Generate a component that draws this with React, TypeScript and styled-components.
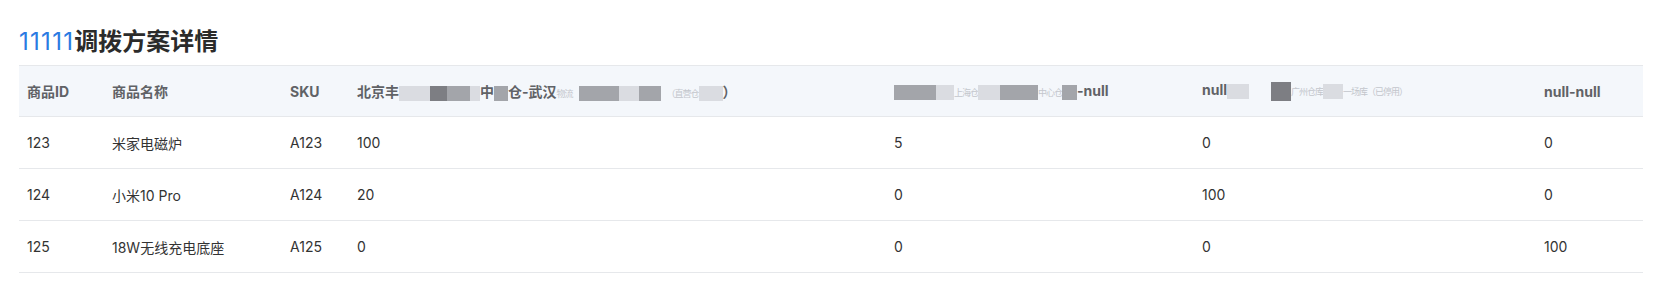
import React from 'react';
import styled, { createGlobalStyle } from 'styled-components';

const GlobalStyle = createGlobalStyle`
  body {
    margin: 0;
    background: #ffffff;
    font-family: Inter, "Noto Sans CJK SC", sans-serif;
  }
`;

const Page = styled.div`
  padding: 26px 20px 0 19px;
`;

const Title = styled.h2`
  margin: 0 0 8px;
  font-size: 24px;
  line-height: 31px;
  font-weight: 700;
  color: #2b2b2b;
`;

const PlanNo = styled.span`
  color: #2a7ae2;
  font-weight: 400;
  letter-spacing: 1.3px;
`;

const Table = styled.table`
  width: 1624px;
  border-collapse: collapse;
  table-layout: fixed;
  font-size: 14px;
`;

const Col = styled.col<{ $w: number }>`
  width: ${p => p.$w}px;
`;

const HeadRow = styled.tr`
  background: #f4f7fb;
  border-top: 1px solid #e6e8eb;
  border-bottom: 1px solid #e6e8eb;
`;

const Th = styled.th`
  height: 50px;
  padding: 0 8px;
  text-align: left;
  font-weight: 700;
  color: #606266;
  white-space: nowrap;
`;

const Row = styled.tr`
  border-bottom: 1px solid #e6e8eb;
`;

const Td = styled.td`
  height: 51px;
  padding: 0 8px;
  color: #333333;
  white-space: nowrap;
`;

// blurred bits of the masked warehouse names
const Faint = styled.span`
  display: inline-block;
  vertical-align: middle;
  font-size: 9px;
  font-weight: 400;
  letter-spacing: -1px;
  color: #c3c6cc;
`;

const tones = {
  dark: '#7d7e83',
  mid: '#a3a5aa',
  light: '#dadce1',
  none: 'transparent',
};

const Mask = styled.span<{ $tone: keyof typeof tones; $w: number; $h?: number }>`
  display: inline-block;
  width: ${p => p.$w}px;
  height: ${p => p.$h ?? 15}px;
  background: ${p => tones[p.$tone]};
  vertical-align: middle;
`;

type Seg =
  | { t: string }
  | { f: string }
  | { b: keyof typeof tones; w: number; h?: number };

const Segs = ({ list }: { list: Seg[] }) => (
  <>
    {list.map((s, i) => {
      if ('t' in s) return <span key={i}>{s.t}</span>;
      if ('f' in s) return <Faint key={i}>{s.f}</Faint>;
      return <Mask key={i} $tone={s.b} $w={s.w} $h={s.h} aria-hidden />;
    })}
  </>
);

const columns: { w: number; head: Seg[] }[] = [
  { w: 85, head: [{ t: '商品ID' }] },
  { w: 178, head: [{ t: '商品名称' }] },
  { w: 67, head: [{ t: 'SKU' }] },
  {
    w: 537,
    head: [
      { t: '北京丰' },
      { b: 'light', w: 31 },
      { b: 'dark', w: 17 },
      { b: 'mid', w: 23 },
      { b: 'light', w: 10 },
      { t: '中' },
      { b: 'mid', w: 14 },
      { t: '仓-武汉' },
      { f: '物流' },
      { b: 'none', w: 6 },
      { b: 'mid', w: 40 },
      { b: 'light', w: 20 },
      { b: 'mid', w: 22 },
      { b: 'none', w: 6 },
      { f: '（直营仓' },
      { b: 'light', w: 24 },
      { t: '）' },
    ],
  },
  {
    w: 308,
    head: [
      { b: 'mid', w: 22 },
      { b: 'mid', w: 20 },
      { b: 'light', w: 18 },
      { f: '上海仓' },
      { b: 'light', w: 22 },
      { b: 'mid', w: 38 },
      { f: '中心仓' },
      { b: 'mid', w: 15 },
      { t: '-null' },
    ],
  },
  {
    w: 342,
    head: [
      { t: 'null' },
      { b: 'light', w: 22 },
      { b: 'none', w: 22 },
      { b: 'dark', w: 20, h: 19 },
      { f: '广州仓库' },
      { b: 'light', w: 20 },
      { f: '一场库（已停用）' },
    ],
  },
  { w: 107, head: [{ t: 'null-null' }] },
];

const rows = [
  ['123', '米家电磁炉', 'A123', '100', '5', '0', '0'],
  ['124', '小米10 Pro', 'A124', '20', '0', '100', '0'],
  ['125', '18W无线充电底座', 'A125', '0', '0', '0', '100'],
];

export default function App() {
  return (
    <Page>
      <GlobalStyle />
      <Title>
        <PlanNo>11111</PlanNo>调拨方案详情
      </Title>
      <Table>
        <colgroup>
          {columns.map((c, i) => (
            <Col key={i} $w={c.w} />
          ))}
        </colgroup>
        <thead>
          <HeadRow>
            {columns.map((c, i) => (
              <Th key={i}>
                <Segs list={c.head} />
              </Th>
            ))}
          </HeadRow>
        </thead>
        <tbody>
          {rows.map(r => (
            <Row key={r[0]}>
              {r.map((v, i) => (
                <Td key={i}>{v}</Td>
              ))}
            </Row>
          ))}
        </tbody>
      </Table>
    </Page>
  );
}
